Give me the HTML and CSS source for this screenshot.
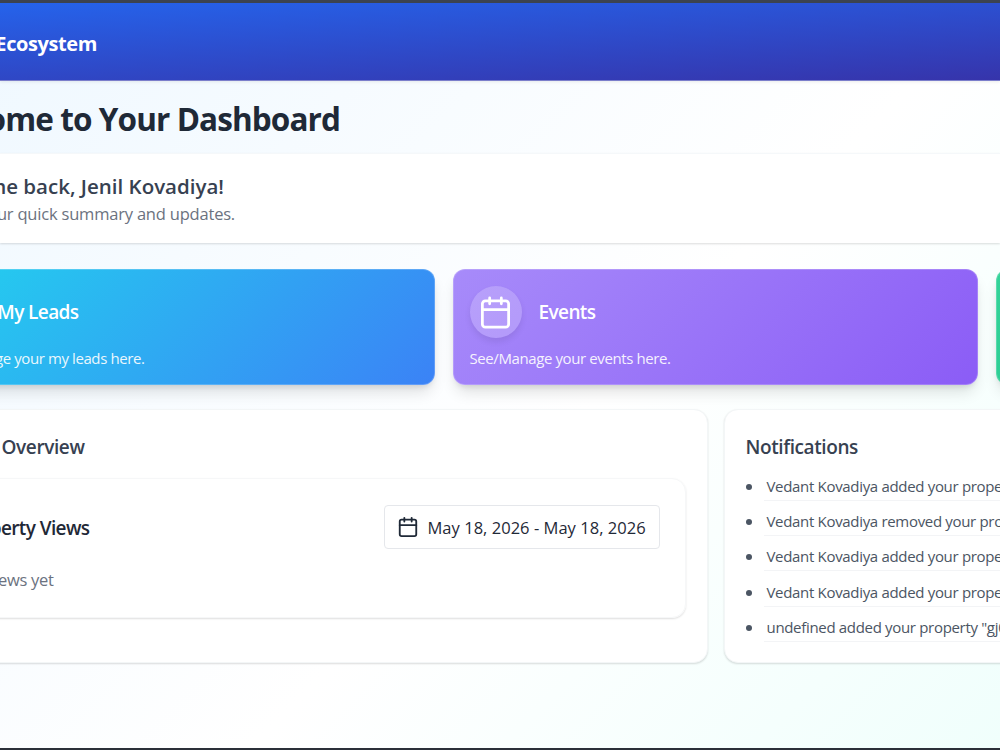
FILE: index.html
```html
<!DOCTYPE html>
<html lang="en">
<head>
    <meta charset="UTF-8">
    <meta name="viewport" content="width=device-width, initial-scale=1.0">
    <title>Dashboard</title>
    <link rel="stylesheet" href="styles.css">
</head>
<body>
    <header class="navbar">
        <div class="brand">Ecosystem</div>
    </header>

    <main class="dashboard">
        <h1 class="page-title">Welcome to Your Dashboard</h1>

        <section class="welcome">
            <h2 class="welcome-name">Welcome back, Jenil Kovadiya!</h2>
            <p class="welcome-text">your quick summary and updates.</p>
        </section>

        <!-- Quick links -->
        <section class="cards">
            <div class="card leads">
                <div class="card-head leads-title"><h3>My Leads</h3></div>
                <p class="leads-text">Manage your my leads here.</p>
            </div>
            <div class="card events">
                <div class="card-head">
                    <span class="card-icon">
                        <svg width="35" height="35" viewBox="0 0 24 24" fill="none" stroke="currentColor" stroke-width="1.9" stroke-linecap="round" stroke-linejoin="round">
                            <rect x="3" y="4" width="18" height="18" rx="2"/>
                            <path d="M8 2v4M16 2v4M3 10h18"/>
                        </svg>
                    </span>
                    <h3>Events</h3>
                </div>
                <p>See/Manage your events here.</p>
            </div>
            <div class="card more"></div>
        </section>

        <section class="panels">
            <div class="panel overview">
                <h3 class="panel-title">Overview</h3>
                <div class="views">
                    <div class="views-head">
                        <h4>Property Views</h4>
                        <button class="date-range" type="button">
                            <svg width="22" height="22" viewBox="0 0 24 24" fill="none" stroke="currentColor" stroke-width="2" stroke-linecap="round" stroke-linejoin="round">
                                <rect x="3" y="4" width="18" height="18" rx="2"/>
                                <path d="M8 2v4M16 2v4M3 10h18"/>
                            </svg>
                            <span>May 18, 2026 - May 18, 2026</span>
                        </button>
                    </div>
                    <p class="views-empty">views yet</p>
                </div>
            </div>

            <div class="panel notifications">
                <h3 class="panel-title">Notifications</h3>
                <ul>
                    <li>Vedant Kovadiya added your property</li>
                    <li>Vedant Kovadiya removed your property</li>
                    <li>Vedant Kovadiya added your property</li>
                    <li>Vedant Kovadiya added your property</li>
                    <li>undefined added your property "gj05"</li>
                </ul>
            </div>
        </section>
    </main>
</body>
</html>
```
FILE: styles.css
```css
* {
    box-sizing: border-box;
}

body {
    margin: 0;
    height: 750px;
    overflow: hidden;
    display: flex;
    flex-direction: column;
    font-family: "Open Sans", "Noto Sans", sans-serif;
    color: #1f2937;
    background: linear-gradient(135deg, #eff8ff 0%, #ffffff 57%, #f0fffc 100%);
    border-top: 3px solid #3c4350;
    border-bottom: 2px solid #2b3039;
    white-space: nowrap;
}

h1, h2, h3, h4, p, ul {
    margin: 0;
    padding: 0;
}

.dashboard {
    overflow: hidden;
    flex: 1;
}

.navbar {
    height: 78px;
    flex-shrink: 0;
    display: flex;
    align-items: center;
    background: linear-gradient(177deg, #2563eb, #3634ab);
    border-bottom: 1px solid #7b7ecb;
    box-shadow: 0 1px 3px rgba(0, 0, 0, 0.08);
    padding-top: 4px;
}

/* left column text runs off the left edge of the window */
.brand, .page-title, .welcome-name, .welcome-text,
.leads-title, .leads-text, .overview .panel-title, .views h4, .views-empty {
    display: flex;
    justify-content: flex-end;
}

.brand {
    width: 97px;
    color: #fff;
    font-size: 20px;
    font-weight: 700;
    letter-spacing: -0.4px;
}

.page-title {
    width: 340px;
    height: 72px;
    align-items: center;
    padding-top: 3px;
    font-size: 31.5px;
    font-weight: 700;
    letter-spacing: -0.9px;
}

.welcome {
    height: 90px;
    margin-bottom: 26px;
    padding-top: 18px;
    background: #fff;
    border-top: 1px solid #f5f8fa;
    box-shadow: 0 1px 2px rgba(0, 0, 0, 0.14);
}

.welcome-name {
    width: 224px;
    font-size: 20.5px;
    line-height: 28px;
    font-weight: 600;
    color: #374151;
}

.welcome-text {
    width: 235px;
    font-size: 16.5px;
    line-height: 28px;
    color: #6b7280;
    letter-spacing: -0.2px;
}

.cards {
    display: grid;
    grid-template-columns: 525px 525px 525px;
    gap: 18px;
    margin-left: -90.5px;
}

.card {
    height: 116px;
    padding: 16px;
    color: #fff;
    border: 1px solid rgba(255, 255, 255, 0.2);
    border-radius: 12px;
    background-origin: border-box;
    box-shadow: 0 10px 15px -3px rgba(0, 0, 0, 0.12), 0 4px 6px -3px rgba(0, 0, 0, 0.12);
}

.leads {
    background-image: linear-gradient(135deg, #22d3ee, #3b82f6);
}

.events {
    background-image: linear-gradient(135deg, #a78bfa, #8b5cf6);
}

.more {
    background-image: linear-gradient(135deg, #34d399, #10b981);
}

.card-head {
    display: flex;
    align-items: center;
    gap: 17px;
    height: 52px;
}

.card-head h3 {
    font-size: 19px;
    font-weight: 600;
    letter-spacing: -0.6px;
}

.card-icon {
    display: flex;
    align-items: center;
    justify-content: center;
    width: 52px;
    height: 52px;
    border-radius: 50%;
    background: rgba(255, 255, 255, 0.2);
    box-shadow: 0 4px 6px rgba(0, 0, 0, 0.08);
}

.card p {
    margin-top: 8px;
    font-size: 15px;
    line-height: 24px;
    letter-spacing: -0.4px;
    opacity: 0.9;
}

.leads-title {
    width: 152px;
}

.card .leads-text {
    width: 218px;
}

.panels {
    display: grid;
    grid-template-columns: 738px 420px;
    gap: 16px;
    margin: 24px 0 0 -30.5px;
}

.panel {
    height: 254px;
    padding: 21px;
    background: #fff;
    border: 1px solid #f3f6f7;
    border-radius: 14px;
    box-shadow: 0 1px 2px rgba(0, 0, 0, 0.14);
}

.panel-title {
    font-size: 19px;
    line-height: 32px;
    font-weight: 600;
    color: #374151;
    letter-spacing: -0.4px;
}

.overview {
    padding-left: 0;
}

.overview .panel-title {
    width: 114px;
}

.views {
    height: 140px;
    margin-top: 15px;
    padding: 26px 25px 0 0;
    border: 1px solid #f6f7f8;
    border-radius: 14px;
    box-shadow: 0 1px 2px rgba(0, 0, 0, 0.13);
}

.views-head {
    display: flex;
    align-items: center;
    justify-content: space-between;
}

.views h4 {
    width: 118px;
    padding-top: 2px;
    font-size: 19px;
    font-weight: 600;
    letter-spacing: -0.6px;
}

.date-range {
    display: flex;
    align-items: center;
    gap: 9px;
    width: 276px;
    height: 44px;
    padding: 0 12px;
    font-family: inherit;
    font-size: 16.5px;
    color: #1f2937;
    letter-spacing: 0.03px;
    background: #fff;
    border: 1px solid #e5e7eb;
    border-radius: 4px;
}

.views-empty {
    width: 82px;
    margin-top: 18px;
    font-size: 16.5px;
    line-height: 26px;
    color: #6b7280;
    letter-spacing: -0.3px;
}

.notifications ul {
    margin-top: 7px;
    list-style: none;
}

.notifications li {
    position: relative;
    height: 31px;
    margin: 0 0 4.2px 18px;
    padding-left: 3px;
    border-bottom: 1px solid #f3f4f6;
    font-size: 15px;
    line-height: 33px;
    color: #4b5563;
    letter-spacing: -0.32px;
}

.notifications li::before {
    content: "";
    position: absolute;
    left: -18px;
    top: 14px;
    width: 6px;
    height: 6px;
    border-radius: 50%;
    background: #4b5563;
}
```
